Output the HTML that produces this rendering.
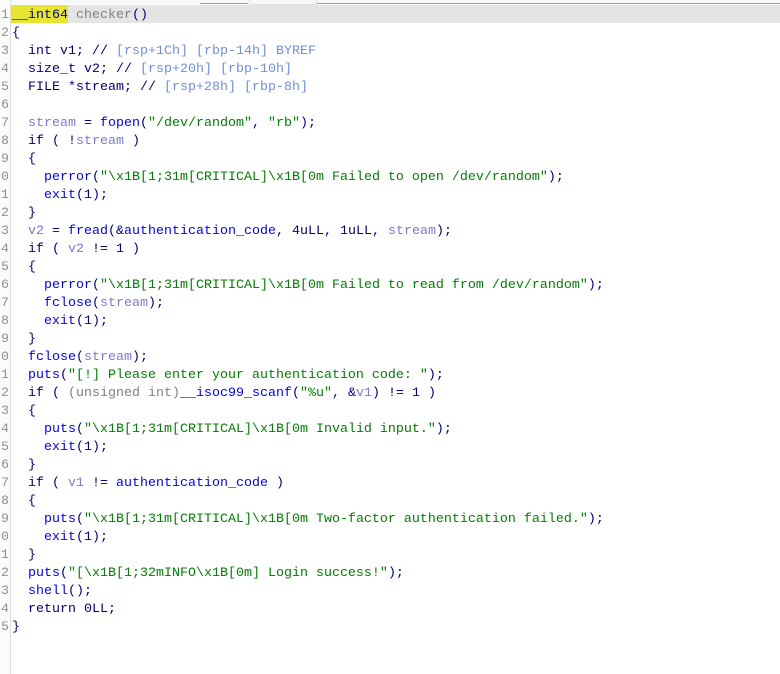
<!DOCTYPE html>
<html><head><style>
html,body{margin:0;padding:0;background:#fff;width:780px;height:674px;overflow:hidden;position:relative}
.top{position:absolute;left:0;top:0;width:780px;height:4px;background:#f8f8f8}
.topl{position:absolute;top:3px;height:1px;background:#a0a0a0}
.gut{position:absolute;left:0;top:0;width:10px;height:674px;background:#fbfbfb;border-right:1px solid #dcdcdc;overflow:hidden}
.band{position:absolute;left:11px;top:5px;width:769px;height:18px;background:#e4e4e4}
.hl{position:absolute;left:11px;top:5px;width:57px;height:18px;background:#e6e632}
.num{position:absolute;right:1px;font:13.33px/18px "Liberation Mono",monospace;color:#909090;white-space:pre;text-align:right}
pre{position:absolute;left:12px;top:7px;margin:0;font:13.33px/18px "Liberation Mono",monospace;color:#000080}
.v{color:#7878d8}.f{color:#0000ff}.s{color:#008000}.c{color:#6e8fe0}.g{color:#808080}
</style></head><body>
<div class="top"></div>
<div class="topl" style="left:200px;width:48px"></div>
<div class="topl" style="left:316px;width:464px"></div>
<div style="position:absolute;left:249px;top:0;width:66px;height:4px;background:#f8f8f8;border:1px solid #e0e0e0;border-top:none"></div>
<div class="band"></div>
<div class="hl"></div>
<div class="gut"><div class="num" style="top:7px">1
2
3
4
5
6
7
8
9
0
1
2
3
4
5
6
7
8
9
0
1
2
3
4
5
6
7
8
9
0
1
2
3
4
5</div></div>
<pre>__int64 <span class="g">checker</span>()
{
  int v1; // <span class="c">[rsp+1Ch] [rbp-14h] BYREF</span>
  size_t v2; // <span class="c">[rsp+20h] [rbp-10h]</span>
  FILE *stream; // <span class="c">[rsp+28h] [rbp-8h]</span>

  <span class="v">stream</span> = <span class="f">fopen</span>(<span class="s">"/dev/random"</span>, <span class="s">"rb"</span>);
  if ( !<span class="v">stream</span> )
  {
    <span class="f">perror</span>(<span class="s">"\x1B[1;31m[CRITICAL]\x1B[0m Failed to open /dev/random"</span>);
    <span class="f">exit</span>(1);
  }
  <span class="v">v2</span> = <span class="f">fread</span>(&amp;<span class="f">authentication_code</span>, 4uLL, 1uLL, <span class="v">stream</span>);
  if ( <span class="v">v2</span> != 1 )
  {
    <span class="f">perror</span>(<span class="s">"\x1B[1;31m[CRITICAL]\x1B[0m Failed to read from /dev/random"</span>);
    <span class="f">fclose</span>(<span class="v">stream</span>);
    <span class="f">exit</span>(1);
  }
  <span class="f">fclose</span>(<span class="v">stream</span>);
  <span class="f">puts</span>(<span class="s">"[!] Please enter your authentication code: "</span>);
  if ( <span class="g">(unsigned int)</span><span class="f">__isoc99_scanf</span>(<span class="s">"%u"</span>, &amp;<span class="v">v1</span>) != 1 )
  {
    <span class="f">puts</span>(<span class="s">"\x1B[1;31m[CRITICAL]\x1B[0m Invalid input."</span>);
    <span class="f">exit</span>(1);
  }
  if ( <span class="v">v1</span> != <span class="f">authentication_code</span> )
  {
    <span class="f">puts</span>(<span class="s">"\x1B[1;31m[CRITICAL]\x1B[0m Two-factor authentication failed."</span>);
    <span class="f">exit</span>(1);
  }
  <span class="f">puts</span>(<span class="s">"[\x1B[1;32mINFO\x1B[0m] Login success!"</span>);
  <span class="f">shell</span>();
  return 0LL;
}</pre>
</body></html>
